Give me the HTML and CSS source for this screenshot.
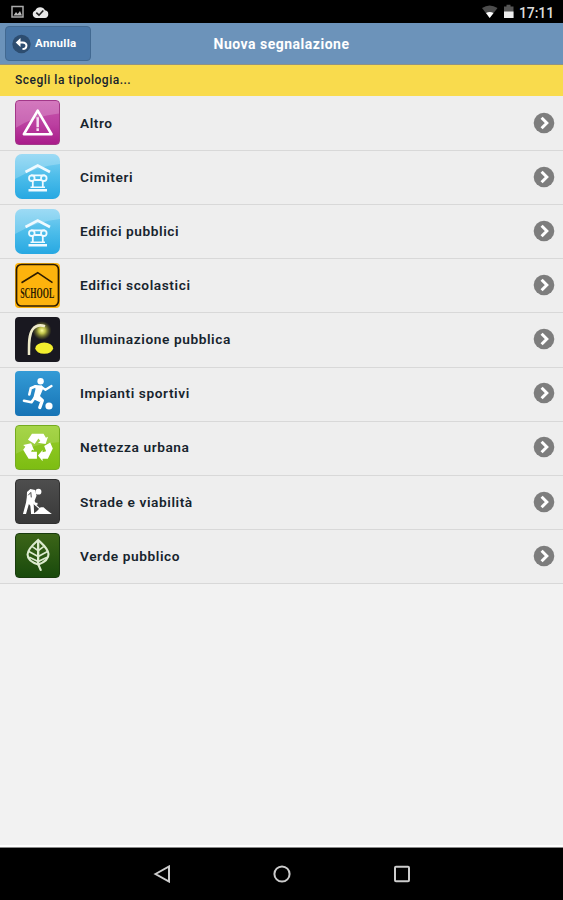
FILE: index.html
```
<!DOCTYPE html>
<html lang="it">
<head>
  <meta charset="UTF-8" />
  <meta name="viewport" content="width=device-width, initial-scale=1.0"/>
  <title>Nuova segnalazione</title>
  <link rel="stylesheet" href="styles.css">
</head>
<body>
  <!-- shared shapes -->
  <svg class="defs" width="0" height="0">
    <defs>
      <symbol id="arrow" viewBox="0 0 22 22">
        <circle cx="11" cy="11" r="10.3" fill="#7d7d7d"/>
        <path d="M8.6 5.8 L13.8 11 L8.6 16.2" fill="none" stroke="#fff" stroke-width="3"/>
      </symbol>
      <symbol id="column" viewBox="0 0 45 45">
        <path d="M0 0H45V10Q22 12 0 25Z" fill="#fff" opacity=".22"/>
        <g fill="none" stroke="#effaff">
          <path d="M10.5 18L22.7 11.5L35 18" stroke-width="2.6"/>
          <path d="M16 21.3H30" stroke-width="1.8"/>
          <circle cx="16.8" cy="24.2" r="2.8" stroke-width="1.8"/>
          <circle cx="28.8" cy="24.2" r="2.8" stroke-width="1.8"/>
          <path d="M19.5 26H26M17.8 27V34M27.8 27V34" stroke-width="1.8"/>
          <path d="M15.5 33.2H30" stroke-width="1.6"/>
          <path d="M13.5 36.3H32" stroke-width="2.6"/>
        </g>
      </symbol>
    </defs>
  </svg>

  <div class="statusbar">
    <svg class="notif" width="38" height="16" viewBox="0 0 38 16">
      <path d="M1 2.5H12V13H1Z" fill="none" stroke="#aaa" stroke-width="1.5"/>
      <path d="M2.5 11.5L5 8L6.7 10L9 7L11 11.5Z" fill="#bbb"/>
      <path d="M25 14A3.9 3.9 0 0 1 24.3 6.5A5.4 5.4 0 0 1 34 6.3A3.9 3.9 0 0 1 34 14Z" fill="#e8e8e8"/>
      <path d="M25.3 8.6L28 11.2L32.3 6.5" fill="none" stroke="#222" stroke-width="1.6"/>
    </svg>
    <div class="status-right">
      <svg width="32" height="16" viewBox="0 0 32 16">
        <path d="M0 4Q7.5 -1 15.5 4L7.7 14Z" fill="#4c4c4c"/>
        <path d="M4 9Q7.7 7 11.5 9L7.7 14Z" fill="#fff"/>
        <path d="M22 2.5H24.5V.8H28.5V2.5H31.5V14H22Z" fill="#555"/>
        <path d="M22 7.5H31.5V14H22Z" fill="#eee"/>
      </svg>
      <span class="time">17:11</span>
    </div>
  </div>

  <div class="header">
    <button class="back">
      <svg width="19" height="20" viewBox="0 0 19 20">
        <circle cx="9.5" cy="10" r="9.2" fill="#2d4d70"/>
        <path d="M5 8.5H10.5C16 8.5 15.5 15 10.5 15" fill="none" stroke="#fff" stroke-width="2"/>
        <path d="M8.5 4L3.7 8.5L8.5 13Z" fill="#fff"/>
      </svg>
      <span>Annulla</span>
    </button>
    <h1>Nuova segnalazione</h1>
  </div>

  <div class="divider">Scegli la tipologia...</div>

  <ul class="list">
    <li>
      <svg class="icon altro" viewBox="0 0 45 45">
        <path d="M0 0H45V13Q18 16 0 28Z" fill="#fff" opacity=".2"/>
        <path d="M22.7 10L8.2 34.8H37.2Z" fill="none" stroke="#fff" stroke-width="2.7" stroke-linejoin="round"/>
        <path d="M22.7 17V27.5M22.7 28.5V31.5" stroke="#f8dff2" stroke-width="2.6"/>
      </svg>
      <span>Altro</span>
      <svg class="arrow"><use href="#arrow"/></svg>
    </li>
    <li>
      <svg class="icon blue" viewBox="0 0 45 45"><use href="#column"/></svg>
      <span>Cimiteri</span>
      <svg class="arrow"><use href="#arrow"/></svg>
    </li>
    <li>
      <svg class="icon blue" viewBox="0 0 45 45"><use href="#column"/></svg>
      <span>Edifici pubblici</span>
      <svg class="arrow"><use href="#arrow"/></svg>
    </li>
    <li>
      <svg class="icon school" viewBox="0 0 45 45">
        <rect x="1.5" y="1.5" width="42" height="41.5" rx="5" fill="none" stroke="#2d1c00" stroke-width="1.7"/>
        <path d="M6.5 19.7L22.7 9.7L37.5 19.7" fill="none" stroke="#2d1c00" stroke-width="1.6"/>
        <text x="5.2" y="34.5" textLength="34" lengthAdjust="spacingAndGlyphs">SCHOOL</text>
      </svg>
      <span>Edifici scolastici</span>
      <svg class="arrow"><use href="#arrow"/></svg>
    </li>
    <li>
      <svg class="icon lamp" viewBox="0 0 45 45">
        <defs>
          <radialGradient id="glow">
            <stop offset="0" stop-color="#fdff9a"/>
            <stop offset=".35" stop-color="#d8dc50" stop-opacity=".85"/>
            <stop offset="1" stop-color="#8a8c20" stop-opacity="0"/>
          </radialGradient>
        </defs>
        <circle cx="27" cy="13.5" r="9.5" fill="url(#glow)"/>
        <path d="M14 38C14 28 13.5 18 17.5 12.5C20.5 8.5 25 7.5 30 9.3" fill="none" stroke="#eeeacb" stroke-width="2.5"/>
        <ellipse cx="29.2" cy="31.2" rx="8.9" ry="5.6" fill="#f3ee2e"/>
      </svg>
      <span>Illuminazione pubblica</span>
      <svg class="arrow"><use href="#arrow"/></svg>
    </li>
    <li>
      <svg class="icon sport" viewBox="0 0 45 45">
        <circle cx="25.6" cy="10.3" r="3.2" fill="#fff"/>
        <path d="M19.5 14L27 14.5L28 18L25 25L28.5 28.5L24.5 31L18 28L20.5 18Z" fill="#fff"/>
        <g fill="none" stroke="#fff" stroke-linejoin="round" stroke-linecap="round">
          <path d="M20.5 15.3L15.8 17.3L14.3 23.5" stroke-width="2.6"/>
          <path d="M26.5 15.8L30.5 18.8L36.5 15" stroke-width="2.3"/>
          <path d="M22.5 26L27.3 29.5L24.8 36.5" stroke-width="3.4"/>
          <path d="M19.5 27L16.5 31.3L9 29.8" stroke-width="2.6"/>
        </g>
        <circle cx="34" cy="35" r="3.6" fill="#fff"/>
      </svg>
      <span>Impianti sportivi</span>
      <svg class="arrow"><use href="#arrow"/></svg>
    </li>
    <li>
      <svg class="icon recycle" viewBox="0 0 45 45">
        <path d="M0 0H45V17Q20 18 0 29Z" fill="#fff" opacity=".14"/>
        <g fill="#fff">
          <path d="M12.5 14.5L16.7 8H28.8L31.3 12.3L33.5 11.3L31 18.8L23 17.5L25.5 15.8L23.5 13L19.5 18.8Z"/>
          <path d="M29.5 21L35.8 17.3L38.5 23.5L33.3 34.3H27.8V36.8L23 31L27.8 25.2V27.5L31.5 26.5Z"/>
          <path d="M7.5 20L15.8 18L19 25.6L16.8 24.8L15.8 27H21.9V34.3H13.2L7.5 24.8L9.8 21.7Z"/>
        </g>
      </svg>
      <span>Nettezza urbana</span>
      <svg class="arrow"><use href="#arrow"/></svg>
    </li>
    <li>
      <svg class="icon road" viewBox="0 0 45 45">
        <circle cx="23.5" cy="12.2" r="3.1" fill="#fff"/>
        <path d="M11.5 12.5L15 9.5L20 10.5L21.5 16.5L20 20.5L18.5 24L19 35.5H15.8L15 27L13.5 25L10.5 35.5H7.3L10.5 23.5L11.3 18Z" fill="#fff"/>
        <path d="M12.8 16L15.5 13L16 18.2" fill="none" stroke="#444" stroke-width="1"/>
        <path d="M13.5 20L26 31" stroke="#fff" stroke-width="1.3"/>
        <path d="M17.5 21L20.5 25.5L22.5 24.5" fill="none" stroke="#fff" stroke-width="2"/>
        <path d="M18 35.5L22 32.5L25.8 28.5H28.8L32 31.5L37.5 35.5Z" fill="#fff"/>
      </svg>
      <span>Strade e viabilità</span>
      <svg class="arrow"><use href="#arrow"/></svg>
    </li>
    <li>
      <svg class="icon leaf" viewBox="0 0 45 45">
        <g fill="none" stroke="#dcebcf" stroke-linecap="round">
          <path d="M23.2 6.3C19 10 12.3 15 12.1 21.5C12.1 27 17 30 23.5 32C30 29.5 34.2 26 34 21C33.7 15 27 10 23.2 6.3Z" stroke-width="2.2"/>
          <path d="M23.2 7V31.5L25.8 37.5" stroke-width="2.4"/>
          <path d="M17.5 13.5L23.2 17.5L28.5 13.5M14 18.5L23.2 23.5L32.5 18.5M14.5 24.5L23.2 28.8L32 24.5" stroke-width="1.7"/>
        </g>
      </svg>
      <span>Verde pubblico</span>
      <svg class="arrow"><use href="#arrow"/></svg>
    </li>
  </ul>

  <div class="navbar">
    <svg width="18" height="18" viewBox="0 0 18 18"><path d="M2.5 9L16 1.5V16.5Z"/></svg>
    <svg width="18" height="18" viewBox="0 0 18 18"><circle cx="9" cy="9" r="7.6"/></svg>
    <svg width="18" height="18" viewBox="0 0 18 18"><rect x="2" y="1.8" width="14" height="14.4" rx="1"/></svg>
  </div>
</body>
</html>
```
FILE: styles.css
```
* {
  box-sizing: border-box;
}

body {
  font-family: Roboto, Arial, sans-serif;
  margin: 0;
  height: 900px;
  display: flex;
  flex-direction: column;
  background-color: #f2f2f2;
  color: #17242d;
  overflow: hidden;
}

.defs {
  position: absolute;
}

.statusbar {
  height: 23px;
  flex-shrink: 0;
  display: flex;
  justify-content: space-between;
  padding: 4px 9px 0 11px;
  background-color: #000;
}

.status-right {
  display: flex;
  gap: 5px;
}

.time {
  color: #ddd;
  font-size: 14px;
  font-weight: 500;
  line-height: 18px;
  letter-spacing: -0.1px;
}

.header {
  height: 42px;
  flex-shrink: 0;
  display: grid;
  grid-template-columns: 1fr auto 1fr;
  align-items: center;
  padding: 0 5px;
  background-color: #6c93ba;
  border-bottom: 1px solid #8f9286;
}

.back {
  width: 86px;
  height: 35px;
  display: flex;
  align-items: center;
  gap: 4px;
  padding: 0 0 0 6px;
  border: 1px solid #426991;
  border-radius: 4px;
  background-color: #4a77a7;
  color: #fff;
  font-family: inherit;
  font-size: 11.5px;
  font-weight: bold;
  letter-spacing: 0.35px;
}

.back span {
  padding-bottom: 2px;
}

.header h1 {
  margin: 0;
  color: #fff;
  font-size: 14px;
  font-weight: bold;
  letter-spacing: 0.5px;
}

.divider {
  height: 31px;
  flex-shrink: 0;
  padding-left: 15px;
  background-color: #f9db4d;
  font-size: 12px;
  font-weight: 500;
  line-height: 31px;
  letter-spacing: 0.5px;
}

.list {
  height: 488px;
  flex-shrink: 0;
  display: grid;
  grid-template-rows: repeat(9, 1fr);
  margin: 0;
  padding: 1px 0 0;
  list-style: none;
  background-color: #eee;
}

.list li {
  display: flex;
  align-items: center;
  padding: 0 8px 1.5px 15px;
  border-bottom: 1px solid #d8d8d8;
  font-size: 13.7px;
  font-weight: 600;
  letter-spacing: 0.58px;
}

.list span {
  flex: 1;
  padding-left: 20px;
}

.icon {
  width: 45px;
  height: 45px;
  border-radius: 4px;
}

.arrow {
  width: 22px;
  height: 22px;
}

.altro {
  background: linear-gradient(#c957ae, #bb3fa0 55%, #a91b8a);
  border: 1px solid #a33789;
}

.blue {
  border-radius: 7px;
  background: linear-gradient(#82d1f2, #4dbdea 50%, #27a8e2);
}

.school {
  overflow: visible;
  background-color: #fdb30d;
}

.school text {
  fill: #2d1c00;
  font-family: "Liberation Serif", serif;
  font-size: 15px;
  font-weight: bold;
  letter-spacing: 0;
}

.lamp {
  background-color: #191820;
}

.sport {
  background: linear-gradient(#349bd6, #1673b5);
}

.recycle {
  background: linear-gradient(#98ce2b, #7dbd12);
  border: 1px solid #75ab20;
}

.road {
  background: linear-gradient(#4e4e4e, #383838);
  border: 1px solid #303030;
}

.leaf {
  background: linear-gradient(#3c6518, #194a0c);
  border: 1px solid #193b0e;
}

.navbar {
  height: 53px;
  flex-shrink: 0;
  display: flex;
  justify-content: center;
  align-items: center;
  gap: 102px;
  margin-top: auto;
  border-top: 1px solid #888;
  background-color: #000;
  box-shadow: 0 -2px 0 #fff;
}

.navbar svg {
  fill: none;
  stroke: #ccc;
  stroke-width: 2;
}
```
